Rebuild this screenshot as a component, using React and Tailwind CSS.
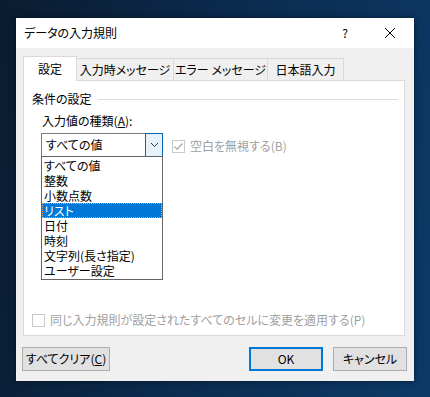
import React from 'react';

const font = { fontFamily: '"Noto Sans CJK JP", "Noto Sans", sans-serif' };

const items = ['すべての値', '整数', '小数点数', 'リスト', '日付', '時刻', '文字列(長さ指定)', 'ユーザー設定'];

const Check = ({ checked }) => (
  <div className="w-[13px] h-[13px] border border-[#c8c8c8] bg-white flex items-center justify-center shrink-0">
    {checked && (
      <svg width="11" height="11" viewBox="0 0 11 11">
        <path d="M1.5 5.5 L4.2 8.2 L9.5 2.5" fill="none" stroke="#a8a8a8" strokeWidth="1.2" />
      </svg>
    )}
  </div>
);

const App = () => {
  return (
    <div
      className="w-[430px] h-[397px] overflow-hidden pt-[18px] pl-[16px] bg-[linear-gradient(100deg,#0a1c30_0%,#0b2a4d_45%,#0c3a68_100%)] text-[12px] text-black whitespace-nowrap [font-feature-settings:'palt']"
      style={font}
    >
      <div className="w-[398px] h-[363px] bg-[#f0f0f0] shadow-[0_0_6px_rgba(0,0,0,0.5)] flex flex-col">
        {/* title bar */}
        <div className="h-[30px] bg-white flex items-center pl-[8px] pr-[18px] shrink-0">
          <span className="text-[12px] leading-none">データの入力規則</span>
          <span className="ml-auto mr-[36px] text-[12px]">?</span>
          <svg width="12" height="12" viewBox="0 0 12 12">
            <path d="M1 1 L11 11 M11 1 L1 11" stroke="#000" strokeWidth="1" />
          </svg>
        </div>

        {/* tabs */}
        <div className="flex items-end pl-[7px] pt-[8px] h-[32px] shrink-0">
          <div className="w-[54px] h-[25px] bg-white border border-[#d9d9d9] border-b-0 flex items-center justify-center relative z-10 -mb-px">
            設定
          </div>
          <div className="w-[97px] h-[22px] bg-[#f0f0f0] border border-[#d9d9d9] border-l-0 border-b-0 flex items-center justify-center">
            入力時メッセージ
          </div>
          <div className="w-[94px] h-[22px] bg-[#f0f0f0] border border-[#d9d9d9] border-l-0 border-b-0 flex items-center justify-center">
            エラー メッセージ
          </div>
          <div className="w-[76px] h-[22px] bg-[#f0f0f0] border border-[#d9d9d9] border-l-0 border-b-0 flex items-center justify-center">
            日本語入力
          </div>
        </div>

        {/* panel */}
        <div className="ml-[7px] w-[382px] h-[256px] bg-white border border-[#d9d9d9] shrink-0 flex flex-col pl-[8px] pr-[6px]">
          <div className="flex items-center mt-[10px] h-[16px]">
            <span>条件の設定</span>
            <div className="flex-1 ml-[6px] h-px bg-[#dcdcdc]" />
          </div>
          <div className="ml-[10px] mt-[6px] h-[16px] flex items-center">
            入力値の種類(<span className="underline">A</span>):
          </div>
          <div className="flex items-start mt-[4px] ml-[9px]">
            <div className="relative">
              <div className="w-[122px] h-[24px] bg-white border border-[#7a7a7a] flex items-center">
                <span className="pl-[4px] flex-1">すべての値</span>
                <div className="w-[18px] h-[24px] -mr-px -my-px border border-[#0a64b4] bg-[#e5f1fb] flex items-center justify-center">
                  <svg width="9" height="6" viewBox="0 0 9 6">
                    <path d="M1 1 L4.5 4.5 L8 1" fill="none" stroke="#333" strokeWidth="1" />
                  </svg>
                </div>
              </div>
              <div className="absolute left-0 top-[23px] w-[122px] bg-white border border-[#646464] z-20 flex flex-col py-px">
                {items.map((it) =>
                  it === 'リスト' ? (
                    <div
                      key={it}
                      className="h-[15px] leading-[13px] pl-[1px] bg-[#0078d7] text-white border border-dotted border-[#f0a050]"
                    >
                      {it}
                    </div>
                  ) : (
                    <div key={it} className="h-[15px] leading-[15px] pl-[2px]">
                      {it}
                    </div>
                  )
                )}
              </div>
            </div>
            <div className="flex items-center ml-[9px] mt-[4px] text-[#a0a0a0]">
              <Check checked />
              <span className="ml-[5px]">空白を無視する(B)</span>
            </div>
          </div>
          <div className="flex items-center mt-[154px] text-[#a0a0a0]">
            <Check />
            <span className="ml-[5px]">同じ入力規則が設定されたすべてのセルに変更を適用する(P)</span>
          </div>
        </div>

        {/* buttons */}
        <div className="flex items-center mt-[11px] pl-[6px] pr-[7px]">
          <button className="w-[88px] h-[24px] bg-[#e1e1e1] border border-[#adadad]">
            すべてクリア(<span className="underline">C</span>)
          </button>
          <button className="ml-auto w-[74px] h-[24px] bg-[#e1e1e1] border-2 border-[#0078d7]">
            OK
          </button>
          <button className="ml-[10px] w-[74px] h-[24px] bg-[#e1e1e1] border border-[#adadad]">
            キャンセル
          </button>
        </div>
      </div>
    </div>
  );
};

export default App;
